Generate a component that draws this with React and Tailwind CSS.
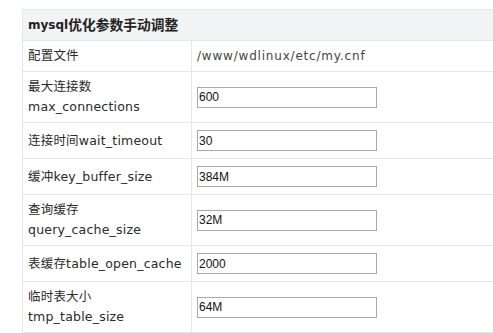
import React from 'react';

const rows = [
  { zh: '配置文件', path: '/www/wdlinux/etc/my.cnf', h: 'h-[31px]' },
  { zh: '最大连接数', en: 'max_connections', value: '600', h: 'h-[51px]', wrap: true },
  { zh: '连接时间', en: 'wait_timeout', value: '30', h: 'h-[36px]' },
  { zh: '缓冲', en: 'key_buffer_size', value: '384M', h: 'h-[36px]' },
  { zh: '查询缓存', en: 'query_cache_size', value: '32M', h: 'h-[51px]', wrap: true },
  { zh: '表缓存', en: 'table_open_cache', value: '2000', h: 'h-[36px]' },
  { zh: '临时表大小', en: 'tmp_table_size', value: '64M', h: 'h-[51px]', wrap: true },
];

function Label({ row }) {
  if (row.wrap) {
    return (
      <div className="flex flex-col leading-[20px]">
        <span>{row.zh}</span>
        <span>{row.en}</span>
      </div>
    );
  }
  return (
    <span className="leading-[20px]">
      {row.zh}
      {row.en}
    </span>
  );
}

export default function App() {
  return (
    <div className="w-[493px] h-[333px] overflow-hidden bg-white font-['DejaVu_Sans','Noto_Sans_CJK_SC',sans-serif] text-[12px] text-[#333]">
      <div className="ml-[22px] mt-[9px] w-[520px] border-t border-l border-[#e4e7ec]">
        {/* header */}
        <div className="h-[31px] flex items-center pl-[5px] bg-[#f2f3f5] border-b border-[#e4e7ec] font-bold text-[#222]">
          <span className="text-[12px]">mysql</span>
          <span className="text-[13.75px]">优化参数手动调整</span>
        </div>

        {rows.map((row) => (
          <div key={row.zh} className={`${row.h} flex border-b border-[#e4e7ec]`}>
            <div className="w-[169px] shrink-0 flex items-center pl-[5px] border-r border-[#e4e7ec] text-[12.5px] tracking-[0.2px] text-[#2a2a2a]">
              <Label row={row} />
            </div>
            <div className="flex-1 flex items-center pl-[5px]">
              {row.path ? (
                <span className="leading-[20px] tracking-[0.8px] text-[#444]">{row.path}</span>
              ) : (
                <input
                  type="text"
                  defaultValue={row.value}
                  className="w-[180px] h-[21px] border border-[#a9a9a9] px-[1px] font-['Liberation_Sans',Arial,sans-serif] text-[12px] text-[#111] outline-none"
                />
              )}
            </div>
          </div>
        ))}
      </div>
    </div>
  );
}
